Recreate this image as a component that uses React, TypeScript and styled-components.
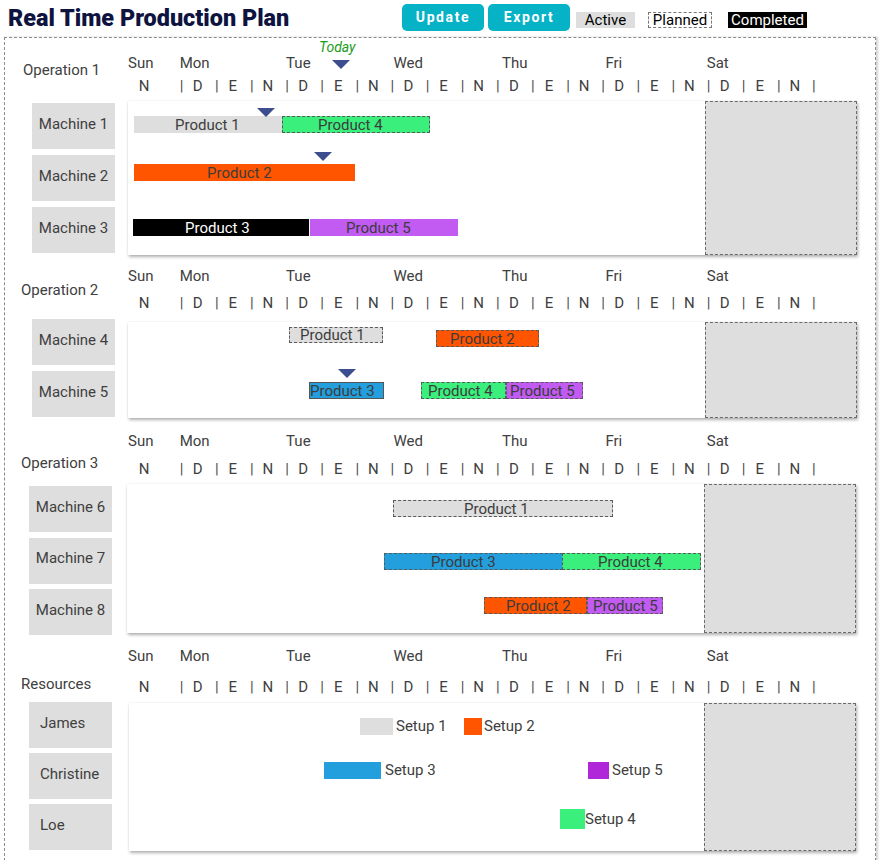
import React from "react";
import styled, { createGlobalStyle } from "styled-components";

const Global = createGlobalStyle`
  html, body { margin: 0; padding: 0; background: #fff; }
  body {
    font-family: Roboto, "Liberation Sans", Arial, sans-serif;
    color: #404040;
    width: 883px;
    height: 860px;
    overflow: hidden;
  }
  * { box-sizing: border-box; }
`;

const Page = styled.div`
  display: flex;
  flex-direction: column;
`;

const TopBar = styled.header`
  display: flex;
  align-items: flex-start;
  height: 37px;
`;

const Title = styled.h1`
  flex: 0 0 402px;
  margin: 5px 0 0;
  padding-left: 8px;
  font: 900 23.4px/27px Roboto, "Liberation Sans", sans-serif;
  color: #0e1340;
  white-space: nowrap;
`;

const ButtonGroup = styled.div`
  display: flex;
  gap: 4px;
  margin-top: 4px;
`;

const ActionButton = styled.button`
  width: 82px;
  height: 27px;
  border: none;
  border-radius: 5px;
  background: #06b2c6;
  color: #fff;
  font: 700 14px/27px Roboto, "Liberation Sans", sans-serif;
  letter-spacing: 1.6px;
  padding: 0;
  text-align: center;
`;

const LegendItem = styled.div<{ $variant: "active" | "planned" | "completed"; $w: number; $ml: number }>`
  margin-top: 12px;
  margin-left: ${(p) => p.$ml}px;
  width: ${(p) => p.$w}px;
  height: 16px;
  font: 400 15px/16px Roboto, "Liberation Sans", sans-serif;
  text-align: center;
  white-space: nowrap;
  background: ${(p) => (p.$variant === "active" ? "#dedede" : p.$variant === "completed" ? "#000" : "#fff")};
  color: ${(p) => (p.$variant === "completed" ? "#fff" : "#000")};
  border: ${(p) => (p.$variant === "planned" ? "1px dashed #777" : "none")};
  line-height: ${(p) => (p.$variant === "planned" ? "14px" : "16px")};
`;

const Board = styled.main`
  margin-left: 4px;
  width: 872px;
  border: 1px dashed #8a8a8a;
  border-bottom: none;
  box-shadow: 2px 0 2px rgba(0, 0, 0, 0.18);
  padding-bottom: 30px;
  display: flex;
  flex-direction: column;
`;

const Section = styled.section`
  display: flex;
  flex-direction: column;
`;

const HeaderGrid = styled.div<{ $mt: number }>`
  display: grid;
  grid-template-columns: 123px 729px;
  margin-top: ${(p) => p.$mt}px;
`;

const OpLabel = styled.div<{ $pt: number; $pl: number }>`
  padding-top: ${(p) => p.$pt}px;
  padding-left: ${(p) => p.$pl}px;
  font-size: 15px;
  line-height: 20px;
  white-space: nowrap;
`;

const Timeline = styled.div<{ $gap: number }>`
  position: relative;
  display: flex;
  flex-direction: column;
  gap: ${(p) => p.$gap}px;
`;

const DayRow = styled.div`
  display: grid;
  grid-template-columns: 51.7px repeat(6, 105.43px);
  height: 20px;
  font-size: 15px;
  line-height: 20px;
`;

const DayName = styled.div<{ $dx: number }>`
  margin-left: ${(p) => p.$dx}px;
  white-space: nowrap;
`;

const ShiftRow = styled.div`
  display: grid;
  grid-template-columns: 51.7px repeat(18, 35.14px) 4px;
  height: 20px;
  font-size: 15px;
  line-height: 20px;
`;

const SunShift = styled.div`
  width: 32px;
  text-align: center;
`;

const ShiftCell = styled.div`
  display: flex;
`;

const Pipe = styled.span`
  width: 4px;
  text-align: center;
  color: #4a4a4a;
`;

const Letter = styled.span`
  width: 28px;
  text-align: center;
`;

const TodayLabel = styled.div`
  position: absolute;
  left: 191px;
  top: -16px;
  font: italic 400 14px/20px Roboto, "Liberation Sans", sans-serif;
  color: #1a9b1a;
`;

const Marker = styled.svg`
  position: absolute;
  display: block;
`;

const Body = styled.div<{ $labelW: number; $panelW: number; $mt: number }>`
  display: grid;
  grid-template-columns: ${(p) => p.$labelW}px ${(p) => p.$panelW}px;
  align-items: start;
  margin-top: ${(p) => p.$mt}px;
`;

const LabelColumn = styled.div<{ $mt: number; $gap: number; $pl: number }>`
  display: flex;
  flex-direction: column;
  gap: ${(p) => p.$gap}px;
  margin-top: ${(p) => p.$mt}px;
  padding-left: ${(p) => p.$pl}px;
`;

const RowLabel = styled.div<{ $align: "center" | "left" }>`
  width: 83px;
  height: 46px;
  background: #dedede;
  display: flex;
  align-items: center;
  justify-content: ${(p) => (p.$align === "center" ? "center" : "flex-start")};
  padding: 0 0 5px ${(p) => (p.$align === "center" ? 0 : 11)}px;
  font-size: 15px;
  white-space: nowrap;
`;

const Panel = styled.div<{ $h: number; $mt: number }>`
  position: relative;
  height: ${(p) => p.$h}px;
  margin-top: ${(p) => p.$mt}px;
  background: #fff;
  box-shadow: 1px 2px 3px rgba(0, 0, 0, 0.3), 0 0 2px rgba(0, 0, 0, 0.08);
`;

const Weekend = styled.div`
  position: absolute;
  top: 0;
  right: 0;
  bottom: 0;
  width: 152px;
  background: #dedede;
  border: 1px dashed #6a6a6a;
`;

const BarBox = styled.div<{ $color: string; $border?: "dashed" | "solid"; $light?: boolean }>`
  position: absolute;
  display: flex;
  align-items: center;
  background: ${(p) => p.$color};
  border: ${(p) => (p.$border === "dashed" ? "1px dashed #5a5a5a" : p.$border === "solid" ? "1px solid #555" : "none")};
  color: ${(p) => (p.$light ? "#fff" : "#3c3c3c")};
  font-size: 15px;
  white-space: nowrap;
  overflow: visible;
`;

const BarText = styled.span<{ $tx: number; $bordered: boolean }>`
  margin-left: ${(p) => p.$tx - (p.$bordered ? 1 : 0)}px;
  line-height: 16px;
`;

const SetupItem = styled.div<{ $gap: number }>`
  position: absolute;
  display: flex;
  align-items: center;
  gap: ${(p) => p.$gap}px;
  font-size: 15px;
  white-space: nowrap;
`;

const Swatch = styled.div<{ $color: string }>`
  background: ${(p) => p.$color};
`;

type Bar = {
  label: string;
  x: number;
  w: number;
  y: number;
  h?: number;
  color: string;
  border?: "dashed" | "solid";
  tx: number;
  light?: boolean;
};

type Setup = { label: string; x: number; w: number; y: number; h: number; color: string; gap: number };

type SectionData = {
  name: string;
  labelPt: number;
  labelPl: number;
  headerMt: number;
  rowGap: number;
  bodyMt: number;
  labelW: number;
  boxPl: number;
  boxMt: number;
  boxGap: number;
  boxAlign: "center" | "left";
  panelMt: number;
  panelH: number;
  panelW: number;
  rows: string[];
  bars?: Bar[];
  markers?: { cx: number; y: number }[];
  setups?: Setup[];
  today?: boolean;
};

const GREEN = "#3bef7c";
const ORANGE = "#ff5500";
const PURPLE = "#c15bf1";
const GRAY = "#dedede";
const BLUE = "#229fdc";

const sections: SectionData[] = [
  {
    name: "Operation 1",
    labelPt: 7,
    labelPl: 18,
    headerMt: 15,
    rowGap: 3,
    bodyMt: 5,
    labelW: 123,
    boxPl: 27,
    boxMt: 2,
    boxGap: 6,
    boxAlign: "center",
    panelMt: 0,
    panelH: 154,
    panelW: 729,
    rows: ["Machine 1", "Machine 2", "Machine 3"],
    today: true,
    bars: [
      { label: "Product 1", x: 134, w: 148, y: 15, color: GRAY, tx: 41 },
      { label: "Product 4", x: 282, w: 148, y: 15, color: GREEN, border: "dashed", tx: 36 },
      { label: "Product 2", x: 134, w: 221, y: 63, color: ORANGE, tx: 73 },
      { label: "Product 3", x: 133, w: 176, y: 118, color: "#000", tx: 52, light: true },
      { label: "Product 5", x: 310, w: 148, y: 118, color: PURPLE, tx: 36 },
    ],
    markers: [
      { cx: 266, y: 7 },
      { cx: 323, y: 51 },
    ],
  },
  {
    name: "Operation 2",
    labelPt: 14,
    labelPl: 16,
    headerMt: 11,
    rowGap: 7,
    bodyMt: 6,
    labelW: 123,
    boxPl: 27,
    boxMt: 0,
    boxGap: 6,
    boxAlign: "center",
    panelMt: 3,
    panelH: 96,
    panelW: 729,
    rows: ["Machine 4", "Machine 5"],
    bars: [
      { label: "Product 1", x: 289, w: 94, y: 5, h: 16, color: GRAY, border: "dashed", tx: 11 },
      { label: "Product 2", x: 436, w: 103, y: 8, color: ORANGE, border: "dashed", tx: 14 },
      { label: "Product 3", x: 309, w: 75, y: 60, color: BLUE, border: "solid", tx: 1 },
      { label: "Product 4", x: 421, w: 85, y: 60, color: GREEN, border: "dashed", tx: 7 },
      { label: "Product 5", x: 506, w: 77, y: 60, color: PURPLE, border: "dashed", tx: 4 },
    ],
    markers: [{ cx: 347, y: 47 }],
  },
  {
    name: "Operation 3",
    labelPt: 22,
    labelPl: 16,
    headerMt: 13,
    rowGap: 8,
    bodyMt: 5,
    labelW: 122,
    boxPl: 24,
    boxMt: 2,
    boxGap: 5.5,
    boxAlign: "center",
    panelMt: 0,
    panelH: 149,
    panelW: 729,
    rows: ["Machine 6", "Machine 7", "Machine 8"],
    bars: [
      { label: "Product 1", x: 393, w: 220, y: 16, color: GRAY, border: "dashed", tx: 71 },
      { label: "Product 3", x: 384, w: 179, y: 69, color: BLUE, border: "dashed", tx: 47 },
      { label: "Product 4", x: 562, w: 139, y: 69, color: GREEN, border: "dashed", tx: 36 },
      { label: "Product 2", x: 484, w: 103, y: 113, color: ORANGE, border: "dashed", tx: 22 },
      { label: "Product 5", x: 587, w: 76, y: 113, color: PURPLE, border: "dashed", tx: 6 },
    ],
  },
  {
    name: "Resources",
    labelPt: 28,
    labelPl: 16,
    headerMt: 11,
    rowGap: 11,
    bodyMt: 5,
    labelW: 124,
    boxPl: 24,
    boxMt: 0,
    boxGap: 5,
    boxAlign: "left",
    panelMt: 1,
    panelH: 148,
    panelW: 727,
    rows: ["James", "Christine", "Loe"],
    setups: [
      { label: "Setup 1", x: 360, w: 33, y: 14, h: 17, color: GRAY, gap: 3 },
      { label: "Setup 2", x: 464, w: 18, y: 14, h: 17, color: ORANGE, gap: 2 },
      { label: "Setup 3", x: 324, w: 57, y: 58, h: 17, color: BLUE, gap: 4 },
      { label: "Setup 5", x: 588, w: 21, y: 58, h: 17, color: "#b026d9", gap: 3 },
      { label: "Setup 4", x: 560, w: 25, y: 106, h: 20, color: GREEN, gap: 0 },
    ],
  },
];

const days = [
  { name: "Mon", dx: 0 },
  { name: "Tue", dx: 1 },
  { name: "Wed", dx: 3 },
  { name: "Thu", dx: 6 },
  { name: "Fri", dx: 4 },
  { name: "Sat", dx: 0 },
];

const shifts = days.flatMap(() => ["D", "E", "N"]);

const Triangle: React.FC<{ left: number; top: number }> = ({ left, top }) => (
  <Marker width="18" height="9" viewBox="0 0 18 9" style={{ left, top }}>
    <polygon points="0,0 18,0 9,9" fill="#3c4e8d" />
  </Marker>
);

const TimelineHeader: React.FC<{ gap: number; today?: boolean }> = ({ gap, today }) => (
  <Timeline $gap={gap}>
    {today && (
      <>
        <TodayLabel>Today</TodayLabel>
        <Triangle left={204} top={7} />
      </>
    )}
    <DayRow>
      <DayName $dx={0}>Sun</DayName>
      {days.map((d) => (
        <DayName key={d.name} $dx={d.dx}>
          {d.name}
        </DayName>
      ))}
    </DayRow>
    <ShiftRow>
      <SunShift>N</SunShift>
      {shifts.map((s, i) => (
        <ShiftCell key={i}>
          <Pipe>|</Pipe>
          <Letter>{s}</Letter>
        </ShiftCell>
      ))}
      <ShiftCell>
        <Pipe>|</Pipe>
      </ShiftCell>
    </ShiftRow>
  </Timeline>
);

const SectionBlock: React.FC<{ s: SectionData }> = ({ s }) => {
  const panelLeft = 5 + s.labelW;
  return (
    <Section>
      <HeaderGrid $mt={s.headerMt}>
        <OpLabel $pt={s.labelPt} $pl={s.labelPl}>
          {s.name}
        </OpLabel>
        <TimelineHeader gap={s.rowGap} today={s.today} />
      </HeaderGrid>
      <Body $labelW={s.labelW} $panelW={s.panelW} $mt={s.bodyMt}>
        <LabelColumn $mt={s.boxMt} $gap={s.boxGap} $pl={s.boxPl}>
          {s.rows.map((r) => (
            <RowLabel key={r} $align={s.boxAlign}>
              {r}
            </RowLabel>
          ))}
        </LabelColumn>
        <Panel $h={s.panelH} $mt={s.panelMt}>
          <Weekend />
          {s.bars?.map((b) => (
            <BarBox
              key={b.label}
              $color={b.color}
              $border={b.border}
              $light={b.light}
              style={{ left: b.x - panelLeft, top: b.y, width: b.w, height: b.h ?? 17 }}
            >
              <BarText $tx={b.tx} $bordered={!!b.border}>
                {b.label}
              </BarText>
            </BarBox>
          ))}
          {s.markers?.map((m, i) => (
            <Triangle key={i} left={m.cx - 9 - panelLeft} top={m.y} />
          ))}
          {s.setups?.map((st) => (
            <SetupItem key={st.label} $gap={st.gap} style={{ left: st.x - panelLeft, top: st.y }}>
              <Swatch $color={st.color} style={{ width: st.w, height: st.h }} />
              <span>{st.label}</span>
            </SetupItem>
          ))}
        </Panel>
      </Body>
    </Section>
  );
};

export default function App() {
  return (
    <Page>
      <Global />
      <TopBar>
        <Title>Real Time Production Plan</Title>
        <ButtonGroup>
          <ActionButton>Update</ActionButton>
          <ActionButton>Export</ActionButton>
        </ButtonGroup>
        <LegendItem $variant="active" $w={59} $ml={6}>
          Active
        </LegendItem>
        <LegendItem $variant="planned" $w={64} $ml={13}>
          Planned
        </LegendItem>
        <LegendItem $variant="completed" $w={79} $ml={16}>
          Completed
        </LegendItem>
      </TopBar>
      <Board>
        {sections.map((s) => (
          <SectionBlock key={s.name} s={s} />
        ))}
      </Board>
    </Page>
  );
}
